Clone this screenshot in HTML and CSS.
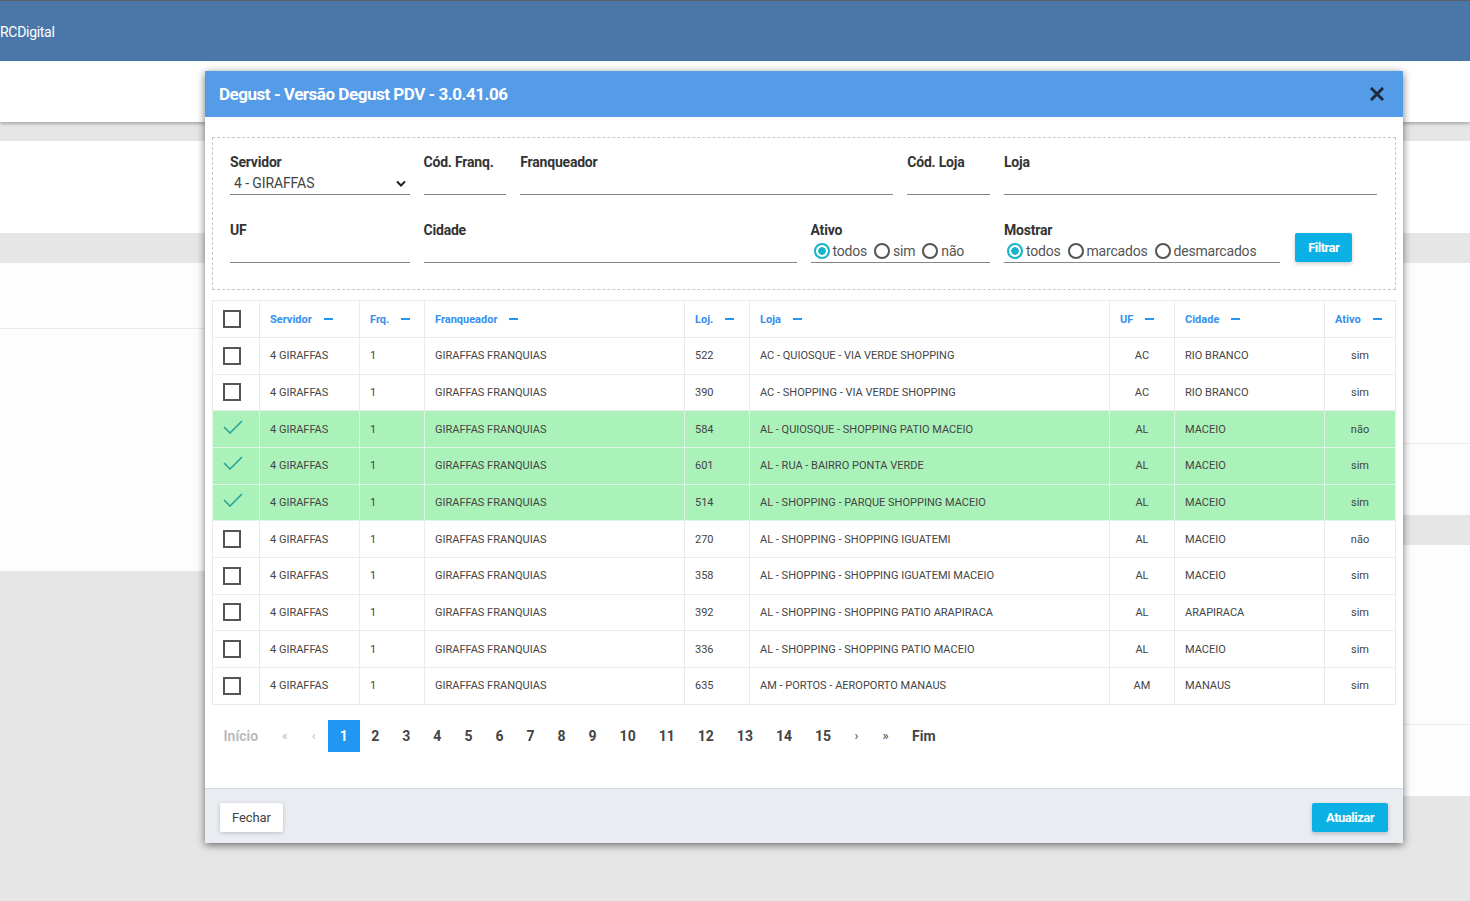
FILE: index.html
```html
<!DOCTYPE html>
<html lang="pt-BR">
<head>
<meta charset="utf-8">
<title>Degust</title>
<link rel="stylesheet" href="styles.css">
</head>
<body>
<div class="page">
  <header class="topbar"><span class="brand">RCDigital</span></header>
  <div class="toolbar"></div>
  <main class="content">
    <div class="col">
      <section class="card card-a"></section>
      <section class="card card-b"><div class="card-head"></div></section>
    </div>
    <div class="col">
      <section class="card card-a"></section>
      <section class="card card-c"><div class="card-head2"></div></section>
      <section class="card card-d"><div class="card-head3"></div></section>
    </div>
  </main>
</div>

<div class="modal">
  <div class="modal-header">
    <h1 class="modal-title">Degust - Versão Degust PDV - 3.0.41.06</h1>
    <button class="close" aria-label="Fechar">
      <svg width="14" height="14" viewBox="0 0 14 14"><path d="M2 2 L12 12 M12 2 L2 12" stroke="#1d2b3a" stroke-width="3" stroke-linecap="square"/></svg>
    </button>
  </div>
  <div class="modal-body">
    <div class="filters">
      <div class="field span2">
        <label class="flabel">Servidor</label>
        <div class="finput select"><span>4 - GIRAFFAS</span>
          <svg class="chev" width="10" height="7" viewBox="0 0 10 7"><path d="M1 1.5 L5 5.5 L9 1.5" fill="none" stroke="#222" stroke-width="2"/></svg>
        </div>
      </div>
      <div class="field span1">
        <label class="flabel">Cód. Franq.</label>
        <div class="finput"></div>
      </div>
      <div class="field span4">
        <label class="flabel">Franqueador</label>
        <div class="finput"></div>
      </div>
      <div class="field span1">
        <label class="flabel">Cód. Loja</label>
        <div class="finput"></div>
      </div>
      <div class="field span4">
        <label class="flabel">Loja</label>
        <div class="finput"></div>
      </div>

      <div class="field span2">
        <label class="flabel">UF</label>
        <div class="finput"></div>
      </div>
      <div class="field span4">
        <label class="flabel">Cidade</label>
        <div class="finput"></div>
      </div>
      <div class="field span2">
        <label class="flabel">Ativo</label>
        <div class="finput radios">
          <span class="radio on"></span><span class="rtext">todos</span>
          <span class="radio"></span><span class="rtext">sim</span>
          <span class="radio"></span><span class="rtext">não</span>
        </div>
      </div>
      <div class="field span3">
        <label class="flabel">Mostrar</label>
        <div class="finput radios">
          <span class="radio on"></span><span class="rtext">todos</span>
          <span class="radio"></span><span class="rtext">marcados</span>
          <span class="radio"></span><span class="rtext">desmarcados</span>
        </div>
      </div>
      <div class="field span1 btncell">
        <button class="btn btn-primary">Filtrar</button>
      </div>
    </div>

    <table class="grid">
      <colgroup>
        <col class="c-chk"><col class="c-srv"><col class="c-frq"><col class="c-fra"><col class="c-loj"><col class="c-loja"><col class="c-uf"><col class="c-cid"><col class="c-atv">
      </colgroup>
      <thead>
        <tr>
          <th class="chk"><span class="box"></span></th>
          <th>Servidor<i class="dash"></i></th>
          <th>Frq.<i class="dash"></i></th>
          <th>Franqueador<i class="dash"></i></th>
          <th>Loj.<i class="dash"></i></th>
          <th>Loja<i class="dash"></i></th>
          <th>UF<i class="dash"></i></th>
          <th>Cidade<i class="dash"></i></th>
          <th>Ativo<i class="dash"></i></th>
        </tr>
      </thead>
      <tbody>
        <tr><td class="chk"><span class="box"></span></td><td>4 GIRAFFAS</td><td>1</td><td>GIRAFFAS FRANQUIAS</td><td>522</td><td>AC - QUIOSQUE - VIA VERDE SHOPPING</td><td class="ctr">AC</td><td>RIO BRANCO</td><td class="ctr">sim</td></tr>
        <tr><td class="chk"><span class="box"></span></td><td>4 GIRAFFAS</td><td>1</td><td>GIRAFFAS FRANQUIAS</td><td>390</td><td>AC - SHOPPING - VIA VERDE SHOPPING</td><td class="ctr">AC</td><td>RIO BRANCO</td><td class="ctr">sim</td></tr>
        <tr class="sel"><td class="chk"><svg class="tick" width="20" height="14" viewBox="0 0 20 14"><path d="M1 7 L7 13 L19 1" fill="none" stroke="#26a69a" stroke-width="1.6"/></svg></td><td>4 GIRAFFAS</td><td>1</td><td>GIRAFFAS FRANQUIAS</td><td>584</td><td>AL - QUIOSQUE - SHOPPING PATIO MACEIO</td><td class="ctr">AL</td><td>MACEIO</td><td class="ctr">não</td></tr>
        <tr class="sel"><td class="chk"><svg class="tick" width="20" height="14" viewBox="0 0 20 14"><path d="M1 7 L7 13 L19 1" fill="none" stroke="#26a69a" stroke-width="1.6"/></svg></td><td>4 GIRAFFAS</td><td>1</td><td>GIRAFFAS FRANQUIAS</td><td>601</td><td>AL - RUA - BAIRRO PONTA VERDE</td><td class="ctr">AL</td><td>MACEIO</td><td class="ctr">sim</td></tr>
        <tr class="sel"><td class="chk"><svg class="tick" width="20" height="14" viewBox="0 0 20 14"><path d="M1 7 L7 13 L19 1" fill="none" stroke="#26a69a" stroke-width="1.6"/></svg></td><td>4 GIRAFFAS</td><td>1</td><td>GIRAFFAS FRANQUIAS</td><td>514</td><td>AL - SHOPPING - PARQUE SHOPPING MACEIO</td><td class="ctr">AL</td><td>MACEIO</td><td class="ctr">sim</td></tr>
        <tr><td class="chk"><span class="box"></span></td><td>4 GIRAFFAS</td><td>1</td><td>GIRAFFAS FRANQUIAS</td><td>270</td><td>AL - SHOPPING - SHOPPING IGUATEMI</td><td class="ctr">AL</td><td>MACEIO</td><td class="ctr">não</td></tr>
        <tr><td class="chk"><span class="box"></span></td><td>4 GIRAFFAS</td><td>1</td><td>GIRAFFAS FRANQUIAS</td><td>358</td><td>AL - SHOPPING - SHOPPING IGUATEMI MACEIO</td><td class="ctr">AL</td><td>MACEIO</td><td class="ctr">sim</td></tr>
        <tr><td class="chk"><span class="box"></span></td><td>4 GIRAFFAS</td><td>1</td><td>GIRAFFAS FRANQUIAS</td><td>392</td><td>AL - SHOPPING - SHOPPING PATIO ARAPIRACA</td><td class="ctr">AL</td><td>ARAPIRACA</td><td class="ctr">sim</td></tr>
        <tr><td class="chk"><span class="box"></span></td><td>4 GIRAFFAS</td><td>1</td><td>GIRAFFAS FRANQUIAS</td><td>336</td><td>AL - SHOPPING - SHOPPING PATIO MACEIO</td><td class="ctr">AL</td><td>MACEIO</td><td class="ctr">sim</td></tr>
        <tr><td class="chk"><span class="box"></span></td><td>4 GIRAFFAS</td><td>1</td><td>GIRAFFAS FRANQUIAS</td><td>635</td><td>AM - PORTOS - AEROPORTO MANAUS</td><td class="ctr">AM</td><td>MANAUS</td><td class="ctr">sim</td></tr>
      </tbody>
    </table>

    <nav class="pager">
      <span class="pg muted">Início</span>
      <span class="pg muted small">«</span>
      <span class="pg muted small">‹</span>
      <span class="pg active">1</span>
      <span class="pg">2</span>
      <span class="pg">3</span>
      <span class="pg">4</span>
      <span class="pg">5</span>
      <span class="pg">6</span>
      <span class="pg">7</span>
      <span class="pg">8</span>
      <span class="pg">9</span>
      <span class="pg">10</span>
      <span class="pg">11</span>
      <span class="pg">12</span>
      <span class="pg">13</span>
      <span class="pg">14</span>
      <span class="pg">15</span>
      <span class="pg small">›</span>
      <span class="pg small">»</span>
      <span class="pg">Fim</span>
    </nav>
  </div>
  <div class="modal-footer">
    <button class="btn btn-default">Fechar</button>
    <button class="btn btn-primary">Atualizar</button>
  </div>
</div>
</body>
</html>
```

FILE: styles.css
```css
* { box-sizing: border-box; }
html, body { margin: 0; padding: 0; }
body {
  font-family: Roboto, "Liberation Sans", Arial, sans-serif;
  background: #e6e6e6;
  width: 1470px;
  height: 901px;
  overflow: hidden;
  position: relative;
}

/* background page */
.page { width: 1470px; }
.topbar {
  height: 61px;
  background: #4a76a8;
  border-top: 1px solid #5c6066;
  display: flex;
  align-items: center;
  padding-top: 1px;
}
.brand { color: #fff; font-size: 14px; margin-left: 0; letter-spacing: -0.3px; }
.toolbar {
  height: 61px;
  background: #fff;
  box-shadow: 0 2px 3px rgba(0,0,0,.25);
  position: relative;
}
.content {
  display: grid;
  grid-template-columns: 1fr 1fr;
  column-gap: 20px;
  padding-top: 19px;
}
.col { display: flex; flex-direction: column; gap: 30px; }
.card { background: #fdfdfd; }
.card-a { height: 92px; background: #fff; }
.card-b { height: 308px; }
.card-head { height: 66px; border-bottom: 1px solid #ececec; }
.card-c { height: 252px; }
.card-head2 { height: 181px; border-bottom: 1px solid #ececec; }
.card-d { height: 251px; }
.card-head3 { height: 180px; border-bottom: 1px solid #ececec; }

/* modal */
.modal {
  position: absolute;
  left: 205px;
  top: 71px;
  width: 1198px;
  background: #fff;
  box-shadow: 0 2px 8px rgba(0,0,0,.55);
}
.modal-header {
  height: 46px;
  background: #549be8;
  display: flex;
  align-items: center;
  justify-content: space-between;
  padding: 0 18px 0 14px;
}
.modal-title {
  margin: 0;
  color: #fff;
  font-size: 17px;
  font-weight: 700;
  letter-spacing: -0.47px;
  padding-top: 0;
}
.close {
  background: none;
  border: 0;
  padding: 0;
  width: 16px;
  height: 16px;
  display: flex;
  align-items: center;
  justify-content: center;
}
.modal-body { padding: 20px 7px 36px 7px; }

/* filters */
.filters {
  border: 1px dashed #c8c8c8;
  padding: 14px 18px 26px 17px;
  display: grid;
  grid-template-columns: repeat(12, 1fr);
  column-gap: 14px;
  row-gap: 25px;
}
.span1 { grid-column: span 1; }
.span2 { grid-column: span 2; }
.span3 { grid-column: span 3; }
.span4 { grid-column: span 4; }
.field { display: flex; flex-direction: column; }
.flabel {
  font-size: 14px;
  font-weight: 700;
  color: #333;
  line-height: 20px;
  height: 20px;
  letter-spacing: -0.2px;
}
.finput {
  height: 23px;
  border-bottom: 1px solid #858585;
  display: flex;
  align-items: center;
  font-size: 14px;
  color: #444;
}
.select { justify-content: space-between; padding: 0 4px 0 4px; }
.select span { letter-spacing: -0.1px; }
.chev { margin-top: 1px; }
.radios { padding-left: 3px; color: #555; }
.radio {
  width: 16px;
  height: 16px;
  border: 2px solid #555;
  border-radius: 50%;
  display: inline-block;
  flex: none;
  margin-right: 3px;
}
.radio.on {
  border-color: #16b4cb;
  background: radial-gradient(circle, #16b4cb 0 3.5px, #fff 4px);
}
.rtext { margin-right: 7px; letter-spacing: -0.2px; }
.btncell { justify-content: flex-end; padding-bottom: 1px; padding-left: 1px; }
.btn {
  font-family: Roboto, "Liberation Sans", Arial, sans-serif;
  height: 29px;
  border: 0;
  border-radius: 2px;
  font-size: 13px;
  cursor: pointer;
}
.btn-primary {
  background: #0bb1e5;
  color: #fff;
  font-weight: 700;
  letter-spacing: -0.5px;
  box-shadow: 0 2px 4px rgba(0,0,0,.2);
}
.btncell .btn { width: 57px; padding: 0; }

/* table */
.grid {
  width: 100%;
  margin-top: 10px;
  border-collapse: collapse;
  table-layout: fixed;
  border: 1px solid #ebebeb;
  font-size: 11px;
  color: #444;
}
.c-chk { width: 47px; }
.c-srv { width: 100px; }
.c-frq { width: 65px; }
.c-fra { width: 260px; }
.c-loj { width: 65px; }
.c-loja { width: 360px; }
.c-uf { width: 65px; }
.c-cid { width: 150px; }
.c-atv { width: 71px; }
.grid th, .grid td {
  border: 1px solid #ebebeb;
  padding: 0 0 0 10px;
  text-align: left;
  white-space: nowrap;
  overflow: hidden;
}
.grid thead tr { height: 37px; }
.grid tbody tr { height: 36.67px; }
.grid th {
  color: #3590ee;
  font-weight: 700;
  font-size: 11px;
}
.dash {
  display: inline-block;
  width: 9px;
  height: 2px;
  background: #2196f3;
  vertical-align: middle;
  margin-left: 12px;
  margin-top: -1px;
}
.grid .chk { padding: 0 0 0 10px; text-align: left; }
.box {
  display: inline-block;
  width: 18px;
  height: 18px;
  border: 2px solid #555;
  vertical-align: middle;
}
.tick { vertical-align: middle; margin-top: -6px; margin-left: 0; }
.grid td.ctr { text-align: center; padding: 0; }
.grid tr.sel td { background: #abf2ba; border-color: #e2f6e6; }
.grid tr.sel + tr td { border-top-color: #ebebeb; }

/* pager */
.pager {
  display: flex;
  align-items: center;
  margin-top: 15px;
  height: 32px;
}
.pg {
  height: 32px;
  line-height: 32px;
  padding: 0 11.5px;
  font-size: 14px;
  font-weight: 700;
  color: #444;
}
.pg.small { font-size: 13px; font-weight: 400; padding: 0 12px; }
.pg.muted { color: #bcbcbc; }
.pg.active { background: #2196f3; color: #fff; padding: 0 12px; }

/* footer */
.modal-footer {
  height: 55px;
  background: #e9edf2;
  border-top: 1px solid #d3dae2;
  display: flex;
  justify-content: space-between;
  align-items: flex-start;
  padding: 14px 15px 0 15px;
}
.btn-default {
  background: #fff;
  color: #444;
  width: 63px;
  box-shadow: 0 1px 4px rgba(0,0,0,.2);
  letter-spacing: -0.1px;
}
.modal-footer .btn-primary { width: 76px; }
```
